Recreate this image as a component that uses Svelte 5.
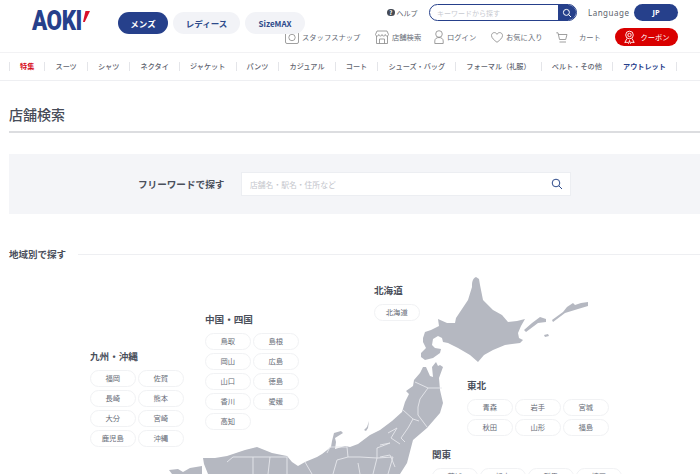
<script>
  const nav = ['特集','スーツ','シャツ','ネクタイ','ジャケット','パンツ','カジュアル','コート','シューズ・バッグ','フォーマル（礼服）','ベルト・その他','アウトレット'];
  const regions = [
    { name: '北海道', x: 374, y: 283, cols: 1, items: ['北海道'] },
    { name: '中国・四国', x: 205, y: 312, cols: 2, items: ['鳥取','島根','岡山','広島','山口','徳島','香川','愛媛','高知'] },
    { name: '九州・沖縄', x: 90, y: 349, cols: 2, items: ['福岡','佐賀','長崎','熊本','大分','宮崎','鹿児島','沖縄'] },
    { name: '東北', x: 467, y: 378, cols: 3, items: ['青森','岩手','宮城','秋田','山形','福島'] },
    { name: '関東', x: 432, y: 447, cols: 4, items: ['茨城','栃木','群馬','埼玉'] }
  ];
</script>

<div class="page">
  <header class="head">
    <div class="brand">
      <div class="logo"><span class="aoki">AOKI</span><i class="slash"></i></div>
      <div class="genders">
        <span class="g on">メンズ</span>
        <span class="g w1">レディース</span>
        <span class="g w2">SizeMAX</span>
      </div>
    </div>
    <div class="tools">
      <div class="row1">
        <span class="help"><b>?</b>ヘルプ</span>
        <div class="search">
          <span class="ph">キーワードから探す</span>
          <span class="sbtn">
            <svg width="10" height="10" viewBox="0 0 10 10" fill="none" stroke="#fff" stroke-width="1"><circle cx="4.4" cy="4.4" r="3"/><path d="M6.6 6.6 9 9"/></svg>
          </span>
        </div>
        <span class="lang">Language</span>
        <span class="jp">JP</span>
      </div>
      <div class="row2">
        <span class="t t1">
          <svg width="14" height="14" viewBox="0 0 14 14" fill="none" stroke="#888" stroke-width=".8"><rect x=".5" y="1.5" width="13" height="12" rx="1.5"/><circle cx="7" cy="7.5" r="3.2"/><path d="M3 1.5 4 .5h6l1 1"/></svg>
          スタッフスナップ
        </span>
        <span class="t t2">
          <svg width="14" height="14" viewBox="0 0 14 14" fill="none" stroke="#888" stroke-width=".8"><path d="M1.5 6v7.5h11V6M.5 4.500 2 1h10l1.500 3.500c0 2-3 2-3.250 0 0 2-3 2-3.250 0 0 2-3 2-3.250 0 0 2-3.250 2-3.250 0Z"/><path d="M4.500 13.500V9h5v4.500"/></svg>
          店舗検索
        </span>
        <span class="t t3">
          <svg width="10" height="14" viewBox="0 0 10 14" fill="none" stroke="#888" stroke-width=".8"><circle cx="5" cy="4" r="3.300"/><path d="M.8 13.500V11c0-2 1.500-3.500 4.200-3.500S9.200 9 9.200 11v2.500Z"/></svg>
          ログイン
        </span>
        <span class="t t4">
          <svg width="12" height="11" viewBox="0 0 12 11" fill="none" stroke="#888" stroke-width=".8"><path d="M6 10.300C3 8 .5 6 .5 3.500 .5 1.800 1.800.6 3.300.6 4.500.6 5.500 1.300 6 2.300 6.500 1.300 7.500.6 8.700.6c1.500 0 2.800 1.200 2.800 2.900C11.500 6 9 8 6 10.300Z"/></svg>
          お気に入り
        </span>
        <span class="t t5">
          <svg width="12" height="11" viewBox="0 0 12 11" fill="none" stroke="#888" stroke-width=".8"><path d="M.3.800h1.700l1.500 6.700h6.200L11 2.500H2.400M3.500 10h6.500"/></svg>
          <em>カート</em>
        </span>
        <span class="coupon">
          <svg width="13" height="14" viewBox="0 0 13 14" fill="none" stroke="#fff" stroke-width=".9"><circle cx="6.500" cy="5" r="3.800"/><circle cx="6.500" cy="5" r="1.700"/><path d="M4 8.500 1.800 12.500l2.400-.3 1.300 1.300 1-3 1 3 1.300-1.300 2.400.3L9 8.500"/></svg>
          クーポン
        </span>
      </div>
    </div>
  </header>

  <nav class="nav">
    {#each nav as n, i}
      <span class="ni" class:red={i === 0} class:blue={i === 11}>{n}</span>
    {/each}
  </nav>

  <main class="main">
    <h1 class="title">店舗検索</h1>
    <section class="band">
      <span class="flabel">フリーワードで探す</span>
      <div class="finput">
        <span>店舗名・駅名・住所など</span>
        <svg width="12" height="12" viewBox="0 0 12 12" fill="none" stroke="#2d4a8a" stroke-width="1"><circle cx="5" cy="5" r="3.800"/><path d="M7.800 7.800 11 11"/></svg>
      </div>
    </section>
    <div class="area"><h2>地域別で探す</h2><hr /></div>
  </main>

  <svg class="map" width="700" height="474" viewBox="0 0 700 474">
    <g fill="#b5b8c1">
      <path d="M476 277C472 279 472 283 472 287L468 300 460 312 456 318 455 323 447 323 438 319 439 326 431 330 425 332 423 338 423 342 426 348 421 353 421 357 425 360 433 358 440 353 441 349 435 348 432 345 433 339 438 336 442 338 443 342 448 343 458 348 470 355 478 362 484 355 493 350 505 345 520 343 523 340 519 338 518 333 521 326 525 319 517 321 508 322 502 315 493 310 483 300 480 285 479 279Z"/>
      <path d="M524 330 532 323 540 317 546 319 546 322 538 323 526 332Z"/>
      <path d="M552 320 563 312 567 307 573 303 575 305 581 303 588 302 588 306 578 309 565 313 553 322Z"/>
      <path d="M544 335 548 334 549 336 545 337Z"/>
      <path d="M436 362 432 367 433 377 430 376 426 367 423 367 420 373 414 380 413 386 406 391 409 394 405 402 402 412 392 421 380 430 370 435 358 444 350 447 345 446 335 449 336 442 335 438 343 433 341 431 334 433 332 441 331 447 322 454 317 457 305 462 298 466 292 462 287 456 272 453 257 447 245 450 227 456 215 458 203 458 204 464 208 474 400 474 407 463 413 440 427 428 440 413 443 403 440 390 439 378 443 367 440 365 438 366Z"/>
      <path d="M169 470 178 469 183 472 190 468 202 466 202 474 172 474Z"/>
      <path d="M369 421 367 427 364 430 366 431 368 428Z"/>
    </g>
    <g fill="none" stroke="#e6e8ec" stroke-width=".9">
      <path d="M415 382 428 388 442 388M428 388 420 399 418 407 418 415 427 427M403 410 413 419 419 421M413 419 408 428 401 438 405 442M388 433 397 428 391 438 400 444M380 445 390 443M380 457 390 455 395 467"/>
      <path d="M227 462 233 457 253 457 253 474M253 457 270 457 268 474M270 457 287 457 287 474M327 453 330 447 347 447 348 457 337 460 333 474M348 457 360 457 377 458 377 448 390 443M358 463 360 474M377 458 373 474M377 458 393 457 388 474M305 462 312 474"/>
    </g>
  </svg>

  {#each regions as r}
    <div class="region" style="left:{r.x}px;top:{r.y}px;grid-template-columns:repeat({r.cols},45.500px)">
      <h3 style="grid-column:1 / -1">{r.name}</h3>
      {#each r.items as it}<span class="pref">{it}</span>{/each}
    </div>
  {/each}
</div>

<style>
  :global(body) { margin: 0; background: #fff; }
  .page {
    position: relative; width: 700px; height: 474px; overflow: hidden;
    font-family: "Noto Sans CJK JP", "Noto Sans", sans-serif; color: #3a3f4b;
  }
  .head { height: 52px; display: flex; border-bottom: 1px solid #f2f2f4; }
  .brand { display: flex; align-items: flex-start; width: 285px; flex: none; position: relative; z-index: 1; }
  .logo { position: relative; width: 86px; margin-left: 32px; height: 34px; flex: none; }
  .aoki {
    position: absolute; left: 0; top: 8px; font: 900 27px/27px Roboto, sans-serif; color: #26408b;
    transform: scaleX(.83); transform-origin: left center; letter-spacing: -.5px;
  }
  .slash { position: absolute; left: 51px; top: 11px; width: 7px; height: 11px; background: #d8102a; clip-path: polygon(35% 0, 100% 0, 25% 100%, 0 100%); }
  .genders { display: flex; gap: 5px; margin-top: 12px; flex: none; }
  .g {
    height: 22px; width: 60px; border-radius: 11px; background: #f2f3f7; color: #2d4a8a; flex: none;
    display: flex; align-items: center; justify-content: center; font-size: 8.500px; font-weight: 700;
  }
  .g.on { background: #26408b; color: #fff; width: 50px; }
  .g.w1 { width: 67px; }
  .g.w2 { font-size: 8px; }
  .tools { width: 415px; padding-top: 4px; flex: none; }
  .row1 { display: flex; align-items: center; height: 17px; margin-left: 102px; }
  .help { display: flex; align-items: center; font-size: 7px; color: #5a5f6b; width: 42px; flex: none; }
  .help b {
    width: 7.500px; height: 7.500px; border-radius: 50%; background: #444a55; color: #fff;
    font-size: 6px; line-height: 7.500px; text-align: center; margin-right: 2px;
  }
  .search {
    width: 148px; height: 17px; box-sizing: border-box; border: 1px solid #26408b; border-radius: 9px; flex: none;
    display: flex; align-items: center; justify-content: space-between; overflow: hidden;
  }
  .ph { font-size: 7px; color: #c8cad0; margin-left: 7px; }
  .sbtn { width: 18px; height: 100%; background: #26408b; display: flex; align-items: center; justify-content: center; }
  .lang { font: 8px "Noto Sans", sans-serif; letter-spacing: .5px; color: #5a5f6b; margin-left: 11px; width: 46px; flex: none; }
  .jp {
    width: 44px; height: 17px; border-radius: 9px; background: #26408b; color: #fff; font: 700 7.500px/17px "Noto Sans", sans-serif;
    text-align: center; flex: none;
  }
  .row2 { position: relative; display: flex; align-items: center; height: 18px; margin-top: 7px; }
  .t { display: flex; align-items: center; gap: 3px; font-size: 7.300px; color: #666b76; white-space: nowrap; flex: none; }
  .t1 { width: 90px; }
  .t2 { width: 59px; }
  .t3 { width: 57px; }
  .t4 { width: 65px; }
  .t5 { width: 59px; }
  .t5 em { font-style: normal; margin-left: 8px; }
  .coupon {
    width: 63px; height: 18px; border-radius: 9px; background: #d90000; color: #fff; font-size: 7.300px; flex: none;
    display: flex; align-items: center; justify-content: center; gap: 4px; box-sizing: border-box;
  }
  .nav { height: 27px; display: flex; align-items: center; padding-left: 9px; border-bottom: 1px solid #eeeff2; }
  .ni {
    font-size: 7.150px; font-weight: 500; padding: 0 10.100px 0 10.100px; line-height: 9px; color: #5f6470; white-space: nowrap;
    border-left: 1px solid #e4e5e9;
  }
  .ni:first-child { padding-left: 10px; }
  .red { color: #d60a1c; font-weight: 700; }
  .blue { color: #26408b; font-weight: 700; border-right: 1px solid #e4e5e9; }
  .main { padding-left: 9px; }
  .title {
    margin: 0; padding-top: 23px; height: 27px; font-size: 14px; line-height: 21px; font-weight: 500;
    color: #474c58; border-bottom: 2px solid #dcdde0;
  }
  .band {
    margin-top: 21px; height: 60px; background: #f4f5f8; display: flex; align-items: center;
    padding-left: 129px;
  }
  .flabel { width: 103px; font-size: 9.600px; font-weight: 700; color: #4a4f5b; white-space: nowrap; flex: none; }
  .finput {
    width: 330px; height: 24px; box-sizing: border-box; background: #fff; border: 1px solid #eceef2; flex: none;
    display: flex; align-items: center; justify-content: space-between; padding: 0 7px 0 8px;
    font-size: 7.800px; color: #c4c6cc;
  }
  .area { display: flex; align-items: center; margin-top: 32px; height: 16px; }
  .area h2 { margin: 0; font-size: 9.500px; font-weight: 700; color: #4a4f5b; white-space: nowrap; }
  .area hr { flex: 1; margin: 0 0 0 12px; border: 0; border-top: 1px solid #eeeff2; }
  .map { position: absolute; left: 0; top: 0; }
  .region { position: absolute; display: grid; row-gap: 2.500px; column-gap: 2.500px; }
  .region h3 { margin: 0 0 4px; font-size: 9.600px; line-height: 14px; font-weight: 700; color: #4a4f5b; white-space: nowrap; }
  .pref {
    height: 17.500px; box-sizing: border-box; border: 1px solid #f1f2f4; border-radius: 9px; background: #fff;
    font-size: 7.300px; line-height: 15.500px; text-align: center; color: #666b76;
  }
</style>
